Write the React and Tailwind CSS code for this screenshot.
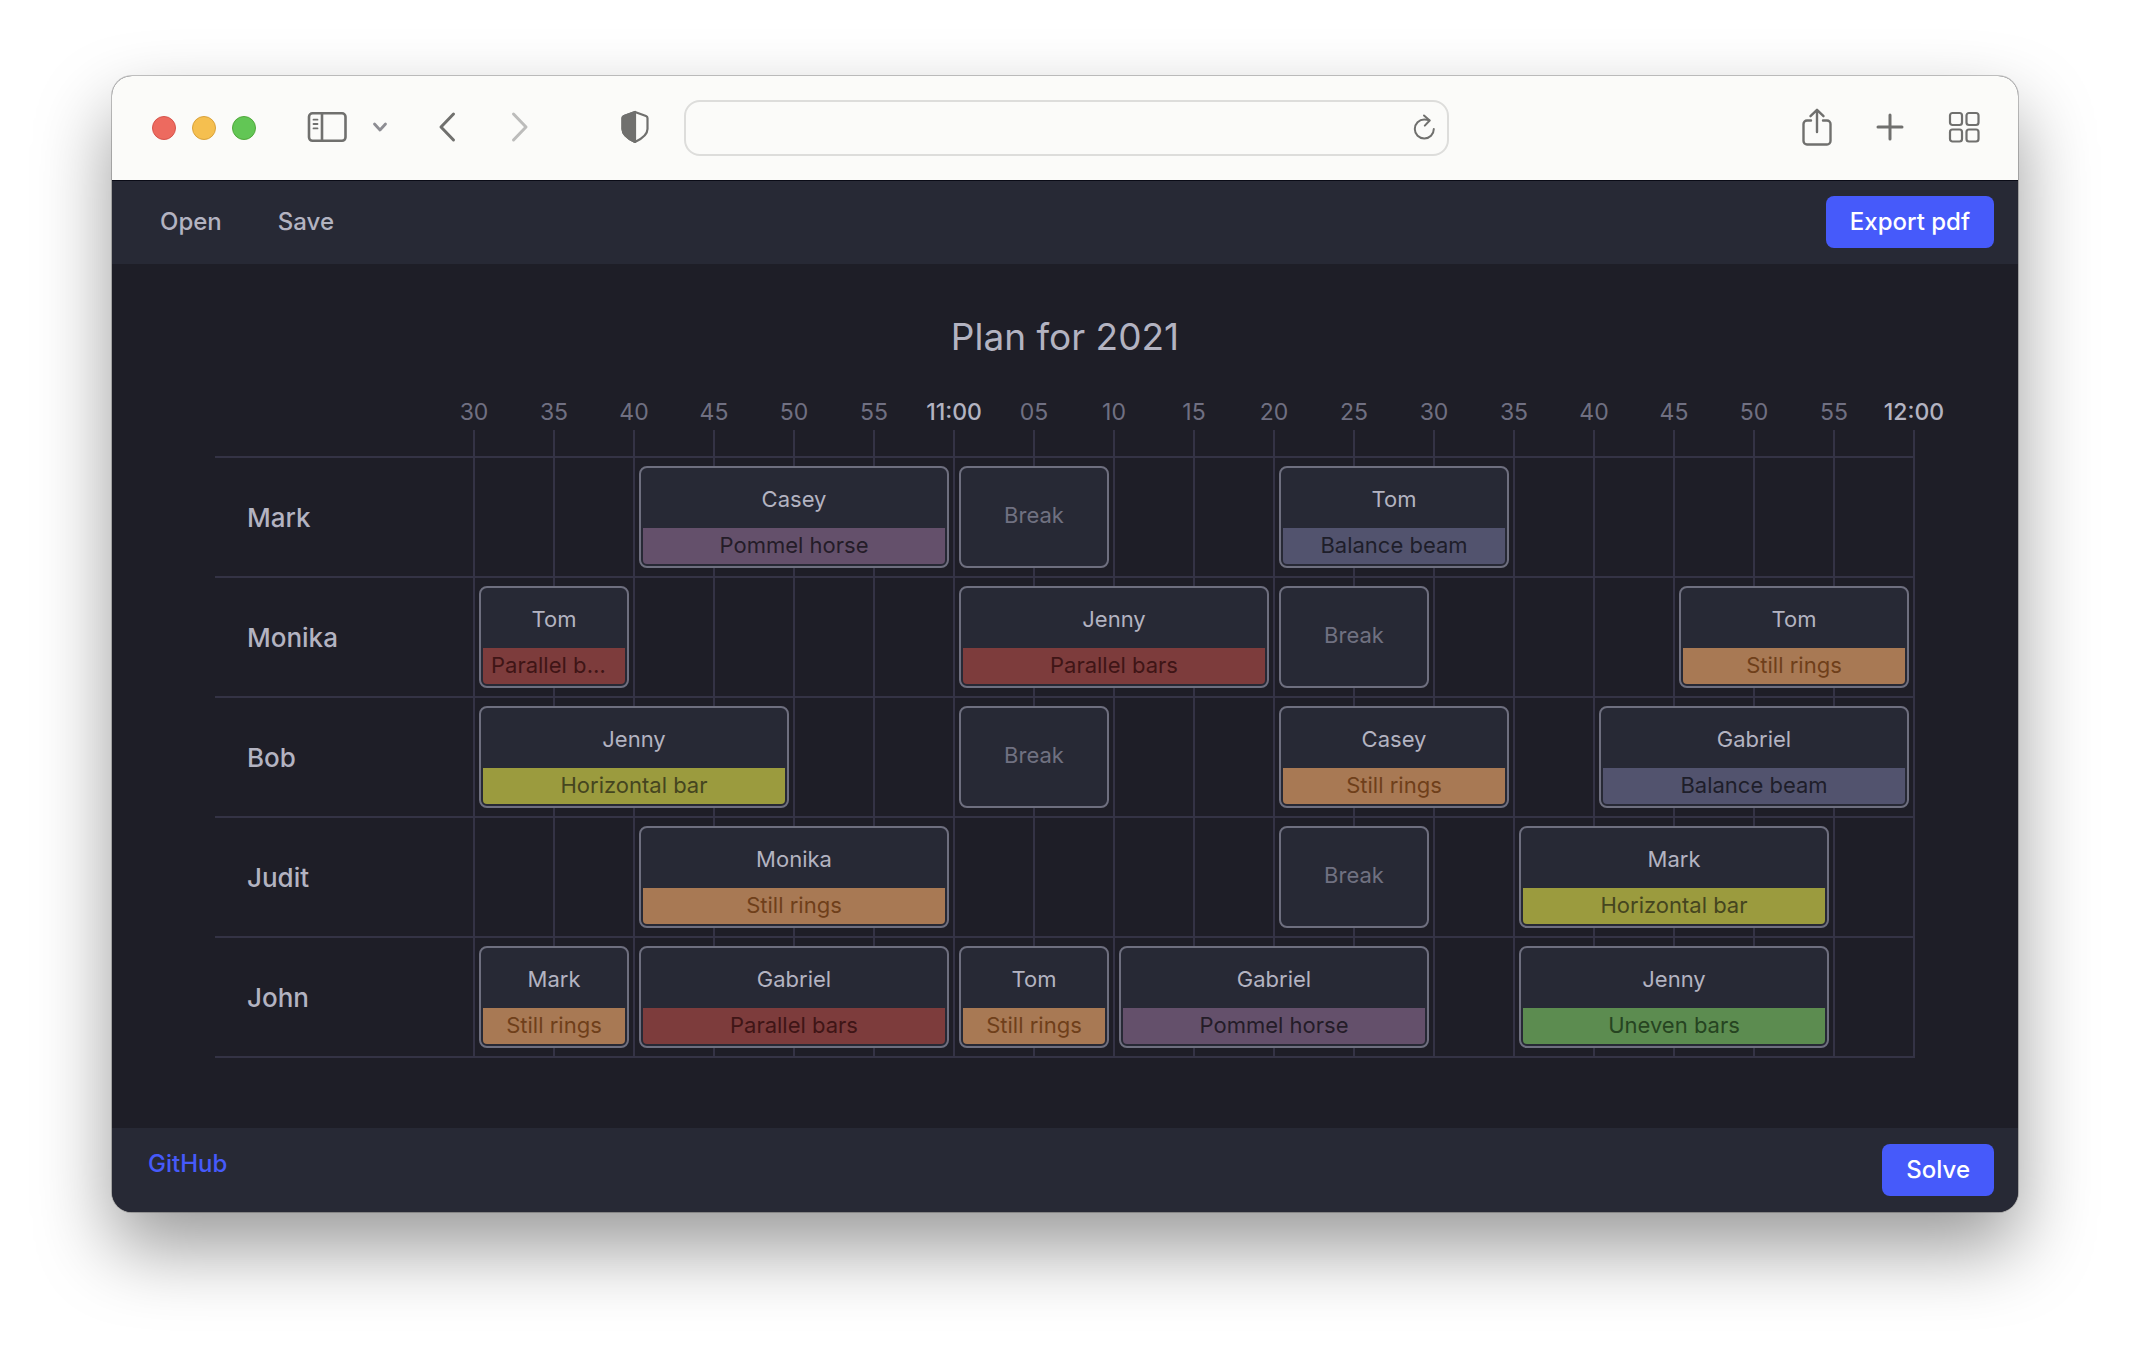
import React from "react";

const ticks = ["30", "35", "40", "45", "50", "55", "11:00", "05", "10", "15", "20", "25", "30", "35", "40", "45", "50", "55", "12:00"];

const colStart = [
  "col-start-1", "col-start-2", "col-start-3", "col-start-4", "col-start-5", "col-start-6",
  "col-start-7", "col-start-8", "col-start-9", "col-start-10", "col-start-11", "col-start-12",
  "col-start-[13]", "col-start-[14]", "col-start-[15]", "col-start-[16]", "col-start-[17]", "col-start-[18]",
];
const colSpan = { 2: "col-end-[span_2]", 3: "col-end-[span_3]", 4: "col-end-[span_4]" };

const apparatus = {
  "Pommel horse": "bg-[#64506b] text-[#241c28]",
  "Balance beam": "bg-[#52536e] text-[#1e1e2a]",
  "Parallel bars": "bg-[#7d3c3c] text-[#3f1516]",
  "Still rings": "bg-[#a87954] text-[#6f3f1a]",
  "Horizontal bar": "bg-[#9b9b3e] text-[#45451f]",
  "Uneven bars": "bg-[#5c8c50] text-[#264421]",
};

const rows = [
  { coach: "Mark", items: [[2, 4, "Casey", "Pommel horse"], [6, 2], [10, 3, "Tom", "Balance beam"]] },
  { coach: "Monika", items: [[0, 2, "Tom", "Parallel bars"], [6, 4, "Jenny", "Parallel bars"], [10, 2], [15, 3, "Tom", "Still rings"]] },
  { coach: "Bob", items: [[0, 4, "Jenny", "Horizontal bar"], [6, 2], [10, 3, "Casey", "Still rings"], [14, 4, "Gabriel", "Balance beam"]] },
  { coach: "Judit", items: [[2, 4, "Monika", "Still rings"], [10, 2], [13, 4, "Mark", "Horizontal bar"]] },
  {
    coach: "John",
    items: [[0, 2, "Mark", "Still rings"], [2, 4, "Gabriel", "Parallel bars"], [6, 2, "Tom", "Still rings"], [8, 4, "Gabriel", "Pommel horse"], [13, 4, "Jenny", "Uneven bars"]],
  },
];

function GridLines() {
  return colStart.map((c) => <div key={c} className={`${c} row-start-1 border-l-2 border-[#343345]`} />);
}

function Block({ item }) {
  const [start, span, name, task] = item;
  return (
    <article className={`${colStart[start]} ${colSpan[span]} row-start-1 mt-2 mb-2 ml-1.5 mr-1 flex min-w-0 flex-col rounded-lg border-2 border-[#6e6f7f] bg-[#272935] p-0.5 text-[22px] leading-[34px]`}>
      {name ? (
        <>
          <h3 className="flex flex-1 items-center justify-center text-[#b3b3c1]">{name}</h3>
          <p className={`h-9 truncate rounded-b px-2 text-center ${apparatus[task]}`}>{task}</p>
        </>
      ) : (
        <p className="flex flex-1 items-center justify-center pb-1 text-[#707181]">Break</p>
      )}
    </article>
  );
}

const stroke = { fill: "none", stroke: "currentColor", strokeLinecap: "round", strokeLinejoin: "round" };

function BrowserBar() {
  return (
    <div className="flex h-26 items-center bg-[#fbfbf9] pr-[38px] pl-10 text-[#70706e]">
      <div className="flex flex-1 items-center">
        <div className="flex gap-4">
          <button aria-label="Close" className="size-6 rounded-full border border-[#d6544c] bg-[#ed6a5f]" />
          <button aria-label="Minimize" className="size-6 rounded-full border border-[#d9a23b] bg-[#f5bf4f]" />
          <button aria-label="Zoom" className="size-6 rounded-full border border-[#51a83c] bg-[#62c655]" />
        </div>
        <div className="flex items-center pb-0.5">
          <button aria-label="Sidebar" className="ml-[51px]">
            <svg width="40" height="32" viewBox="0 0 40 32" {...stroke} strokeWidth="2.6">
              <rect x="2" y="2.3" width="36.5" height="27.5" rx="3.5" />
              <path d="M15 2.5v27" />
              <path d="M6.5 8.7h4M6.5 13h4M6.5 17.4h4" strokeWidth="1.8" />
            </svg>
          </button>
          <button aria-label="Tab groups" className="ml-[25px] text-[#8d8d93]">
            <svg width="16" height="12" viewBox="0 0 16 12" {...stroke} strokeWidth="2.8">
              <path d="M2.5 3 8 9l5.500-6" />
            </svg>
          </button>
          <button aria-label="Back" className="ml-[50px]">
            <svg width="18" height="32" viewBox="0 0 18 32" {...stroke} strokeWidth="3">
              <path d="M15.500 3 3 16l12.500 13" />
            </svg>
          </button>
          <button aria-label="Forward" className="ml-[55px] text-[#bcbcbb]">
            <svg width="18" height="32" viewBox="0 0 18 32" {...stroke} strokeWidth="3">
              <path d="M2.500 3 15 16 2.500 29" />
            </svg>
          </button>
          <button aria-label="Privacy report" className="ml-[92px]">
            <svg width="28" height="34" viewBox="0 0 28 34" {...stroke} strokeWidth="2.2">
              <path d="M14 2 25 6c1 .4 1.500 1 1.500 2v11c0 6-5 9.500-12.500 13C6.500 28.500 1.500 25 1.500 19V8c0-1 .5-1.600 1.500-2z" />
              <path d="M14 2v30C6.500 28.500 1.500 25 1.500 19V8c0-1 .5-1.600 1.500-2z" fill="currentColor" />
            </svg>
          </button>
        </div>
      </div>
      <div className="flex h-14 w-[42%] max-w-[765px] items-center rounded-2xl border-2 border-[#dddddb] pr-3">
        <input aria-label="Address" className="h-full min-w-0 flex-1 bg-transparent px-4 text-xl outline-none" />
        <button aria-label="Reload">
          <svg width="22" height="28" viewBox="0 0 22 28" {...stroke} strokeWidth="2">
            <path d="M20.800 15a9.500 9.500 0 1 1-9.500-9.500c2 0 3.500.2 5 .8" />
            <path d="M11 1.500 16.700 6.500 11.800 11.600" />
          </svg>
        </button>
      </div>
      <div className="flex flex-1 items-center justify-end pb-0.5">
        <button aria-label="Share">
          <svg width="30" height="38" viewBox="0 0 30 38" {...stroke} strokeWidth="2.4">
            <path d="M9 12.500H5A3.500 3.500 0 0 0 1.500 16v17A3.500 3.500 0 0 0 5 36.500h20a3.500 3.500 0 0 0 3.500-3.500V16a3.500 3.500 0 0 0-3.500-3.500h-4" />
            <path d="M15 24V2M8.500 8.200 15 1.800l6.500 6.400" />
          </svg>
        </button>
        <button aria-label="New tab" className="ml-11">
          <svg width="28" height="28" viewBox="0 0 28 28" {...stroke} strokeWidth="3">
            <path d="M14 2v24M2 14h24" />
          </svg>
        </button>
        <button aria-label="Tab overview" className="ml-11">
          <svg width="32" height="32" viewBox="0 0 32 32" {...stroke} strokeWidth="2.2">
            <rect x="2" y="2" width="12" height="12" rx="2.500" />
            <rect x="18.500" y="2" width="12" height="12" rx="2.500" />
            <rect x="2" y="18.500" width="12" height="12" rx="2.500" />
            <rect x="18.500" y="18.500" width="12" height="12" rx="2.500" />
          </svg>
        </button>
      </div>
    </div>
  );
}

export default function App() {
  return (
    <div className="min-h-screen bg-white px-28 pt-[76px] pb-36 font-['Inter',sans-serif] text-[#b3b3c1]">
      <div className="overflow-hidden rounded-[20px] bg-[#1e1e27] shadow-[0_0_0_1px_rgba(0,0,0,0.22),0_36px_76px_rgba(0,0,0,0.4)]">
        <BrowserBar />

        <header className="flex h-21 items-center justify-between bg-[#272935] px-6 text-2xl font-medium shadow-[inset_0_1px_0_#0a0b16]">
          <nav className="flex gap-2">
            <button className="px-6 py-2">Open</button>
            <button className="px-6 py-2">Save</button>
          </nav>
          <button className="h-13 rounded-lg bg-[#465afa] px-6 text-white">Export pdf</button>
        </header>

        <main className="px-[103px] pt-12 pb-[70px]">
          <h1 className="text-center text-[37px] leading-[50px]">Plan for 2021</h1>

          <div className="mt-9 mb-1 ml-[258px] grid grid-cols-[repeat(18,minmax(0,1fr))] px-px text-[23px] leading-7 text-[#707082]">
            {ticks.map((t, i) => (
              <div
                key={i}
                className={`row-start-1 flex w-0 justify-center whitespace-nowrap ${i < 18 ? colStart[i] : "col-start-[18] justify-self-end"} ${t.includes(":") ? "font-medium text-[#b3b3c1]" : ""}`}
              >
                {t}
              </div>
            ))}
          </div>
          <div className="ml-[258px] grid h-[26px] grid-cols-[repeat(18,minmax(0,1fr))] border-r-2 border-[#343345]">
            <GridLines />
          </div>

          <div className="border-b-2 border-[#343345]">
            {rows.map((r) => (
              <section key={r.coach} className="flex h-30 border-t-2 border-[#343345]">
                <h2 className="flex w-[258px] shrink-0 items-center pl-8 text-[26px] font-medium">{r.coach}</h2>
                <div className="grid flex-1 grid-cols-[repeat(18,minmax(0,1fr))] grid-rows-1 border-r-2 border-[#343345]">
                  <GridLines />
                  {r.items.map((item) => <Block key={item[0]} item={item} />)}
                </div>
              </section>
            ))}
          </div>
        </main>

        <footer className="flex h-21 items-center justify-between bg-[#272935] pr-6 pl-9 text-2xl font-medium">
          <a href="#github" className="pb-3 text-[#465afa]">GitHub</a>
          <button className="h-13 rounded-lg bg-[#465afa] px-6 text-white">Solve</button>
        </footer>
      </div>
    </div>
  );
}
